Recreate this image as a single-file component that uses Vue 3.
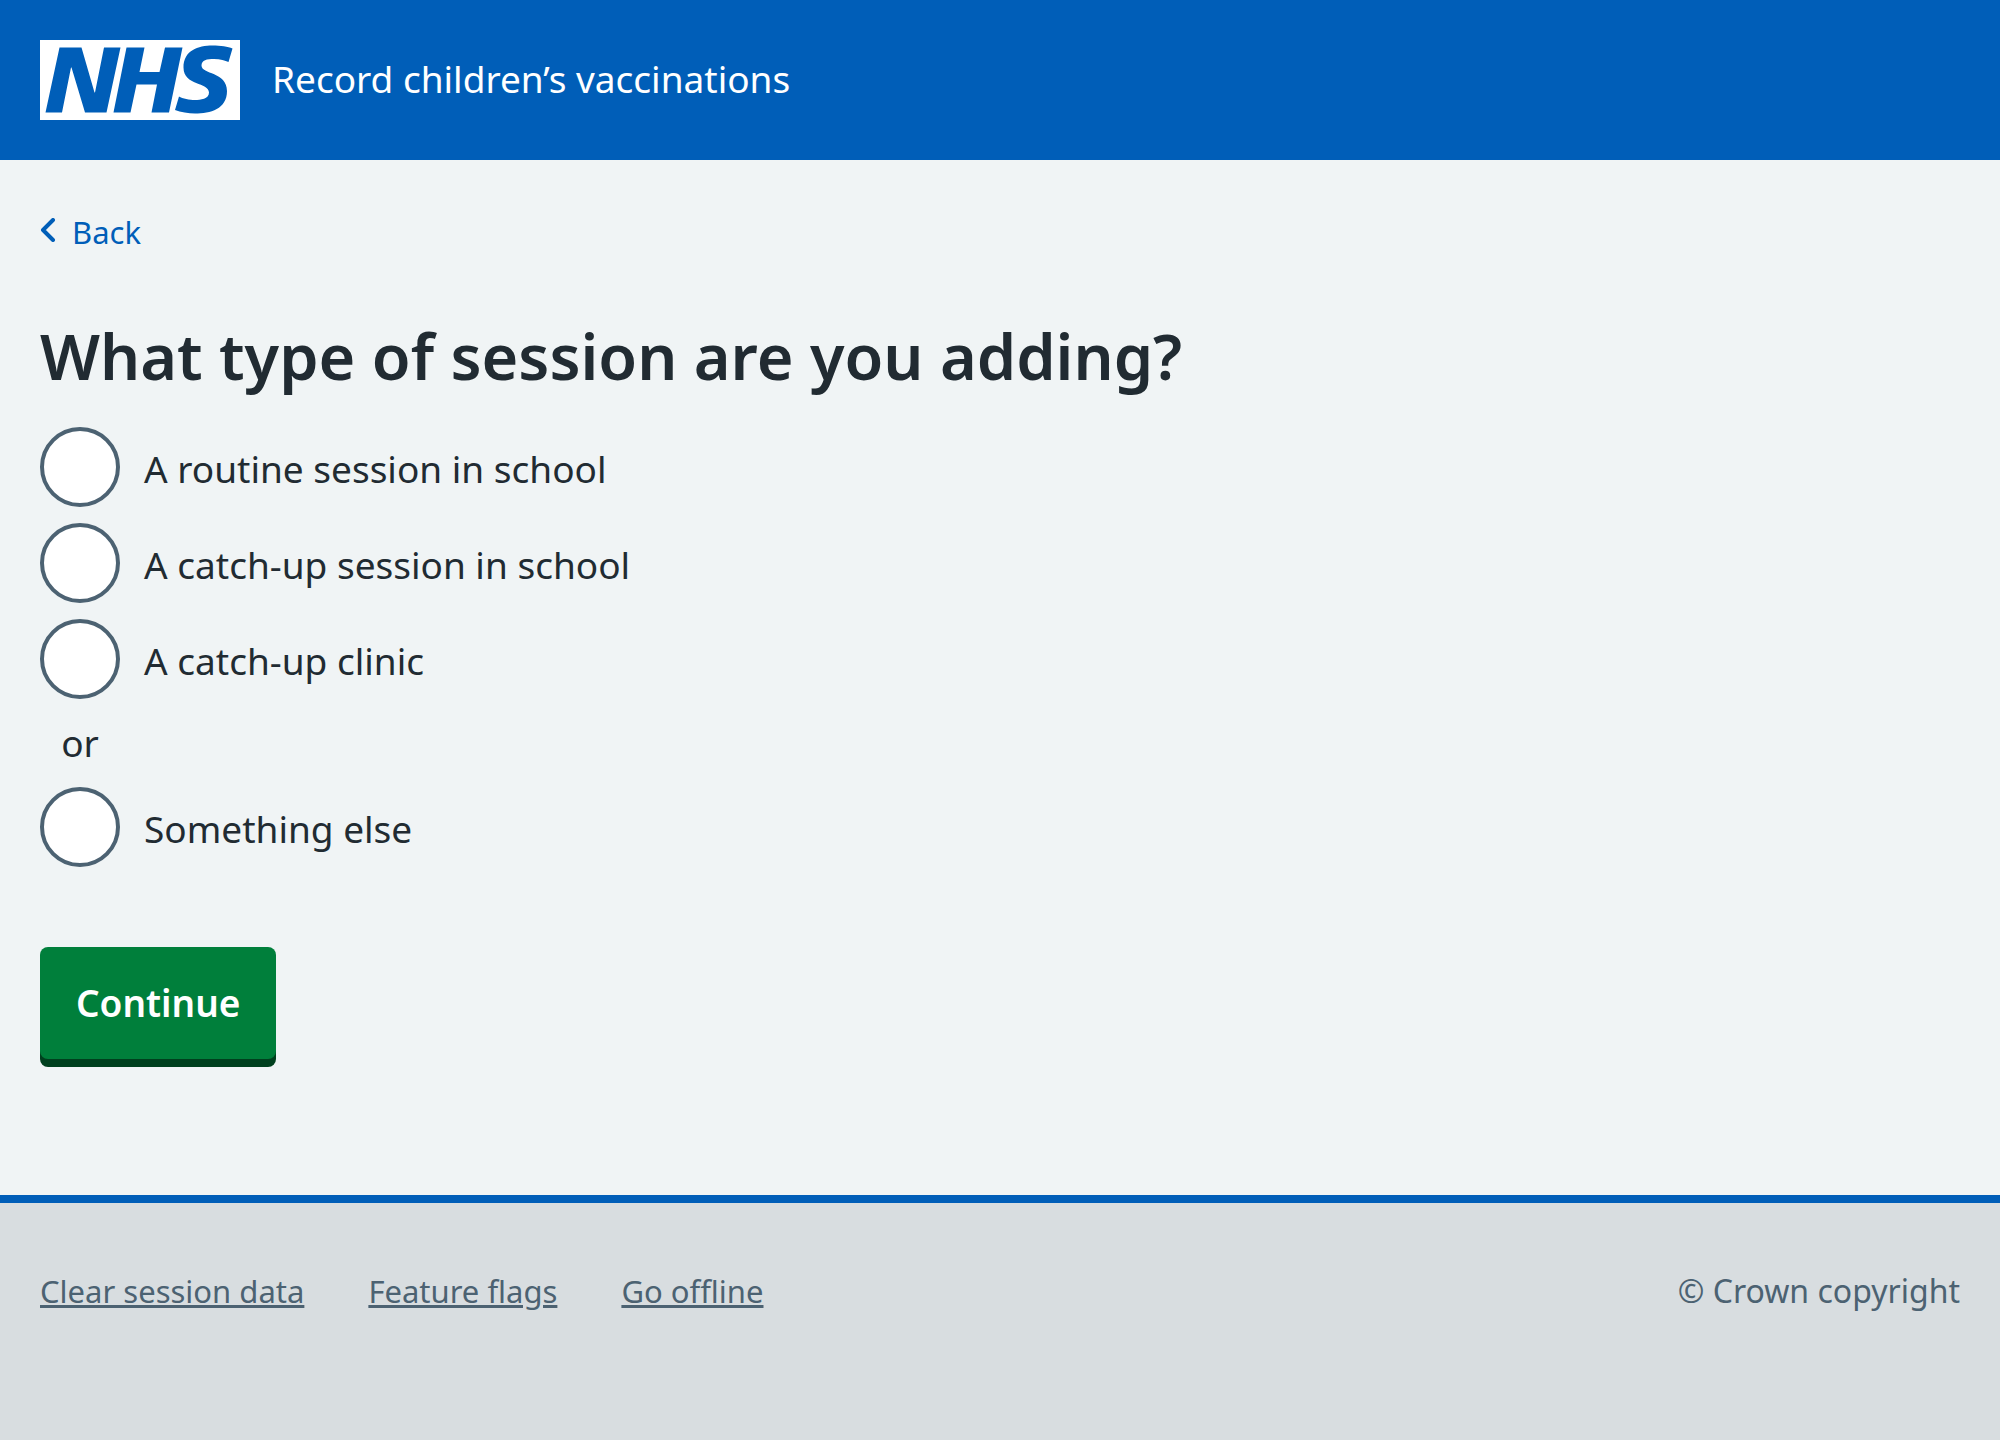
<script setup>
import { ref } from 'vue'

const choice = ref('')
const places = [
  { value: 'routine', label: 'A routine session in school' },
  { value: 'catch-up', label: 'A catch-up session in school' },
  { value: 'clinic', label: 'A catch-up clinic' },
]
const footerLinks = ['Clear session data', 'Feature flags', 'Go offline']
</script>

<template>
  <div class="page">
    <header class="header">
      <a class="brand" href="#">
        <svg class="logo" viewBox="0 0 40 16" role="img" aria-label="NHS">
          <path fill="#fff" d="M0 0h40v16H0z" />
          <path fill="#005eb8" d="M3.9 1.5h4.4l2.6 9h.1l1.8-9h3.3l-2.8 13H9l-2.7-9h-.1l-1.8 9H1.1M17.3 1.5h3.6l-1 4.9h4L25 1.5h3.5l-2.7 13h-3.5l1.1-5.6h-4.1l-1.2 5.6h-3.4M37.7 4.4c-.7-.3-1.6-.6-2.9-.6-1.4 0-2.5.2-2.5 1.3 0 1.8 5.1 1.2 5.1 5.1 0 3.6-3.3 4.5-6.4 4.5-1.3 0-2.9-.3-4-.7l.8-2.7c.7.4 2.1.7 3.2.7s2.8-.2 2.8-1.5c0-2.1-5.1-1.3-5.1-5 0-3.4 2.9-4.4 5.8-4.4 1.6 0 3.1.2 4 .6" />
        </svg>
        <span class="service">Record children’s vaccinations</span>
      </a>
    </header>
    <main class="main">
      <a class="back" href="#">
        <svg class="chevron" viewBox="0 0 16 24" aria-hidden="true">
          <path d="M13 2 3 12l10 10" fill="none" stroke="currentColor" stroke-width="4" stroke-linecap="round" stroke-linejoin="round" />
        </svg>
        Back
      </a>
      <form @submit.prevent>
        <fieldset class="fieldset">
          <legend class="legend"><h1 class="title">What type of session are you adding?</h1></legend>
          <div class="options">
            <label v-for="place in places" :key="place.value" class="option">
              <input v-model="choice" class="radio" type="radio" name="session" :value="place.value" />
              <span class="option-text">{{ place.label }}</span>
            </label>
            <div class="divider">or</div>
            <label class="option">
              <input v-model="choice" class="radio" type="radio" name="session" value="other" />
              <span class="option-text">Something else</span>
            </label>
          </div>
        </fieldset>
        <button class="button" type="submit">Continue</button>
      </form>
    </main>
    <footer class="footer">
      <nav class="footer-links">
        <a v-for="link in footerLinks" :key="link" href="#">{{ link }}</a>
      </nav>
      <p class="copyright">© Crown copyright</p>
    </footer>
  </div>
</template>

<style>
body {
  margin: 0;
  background: #d8dde0;
}
</style>

<style scoped>
.page {
  min-height: 100vh;
  display: flex;
  flex-direction: column;
  background: #f0f4f5;
  color: #212b32;
  font-family: "Noto Sans", sans-serif;
  font-size: 37px;
  line-height: 56px;
  font-variant-ligatures: none;
}
.header {
  padding: 40px;
  background: #005eb8;
}
.brand {
  display: flex;
  align-items: center;
  gap: 32px;
  color: #fff;
  text-decoration: none;
}
.logo {
  width: 200px;
  height: 80px;
}
.service {
  padding-bottom: 2px;
}
.main {
  padding: 48px 40px 136px;
}
.back {
  display: flex;
  align-items: center;
  gap: 16px;
  width: fit-content;
  color: #005eb8;
  font-size: 31px;
  line-height: 48px;
  text-decoration: none;
}
.chevron {
  width: 16px;
  height: 24px;
  margin-bottom: 4px;
}
.fieldset {
  margin: 0;
  padding: 0;
  border: 0;
}
.legend {
  padding: 0;
}
.title {
  margin: 64px 0 35px;
  font-size: 63px;
  line-height: 72px;
  font-weight: 600;
}
.options {
  display: flex;
  flex-direction: column;
  gap: 16px;
}
.option {
  display: flex;
  align-items: center;
  gap: 24px;
  width: fit-content;
}
.option-text {
  padding-top: 4px;
}
.radio {
  appearance: none;
  width: 80px;
  height: 80px;
  margin: 0;
  box-sizing: border-box;
  border: 4px solid #4c6272;
  border-radius: 50%;
  background: #fff;
}
.radio:checked {
  background: radial-gradient(#212b32 20px, #fff 21px);
}
.divider {
  width: 80px;
  text-align: center;
}
.button {
  margin: 80px 0 0;
  padding: 28px 36px;
  border: 0;
  border-radius: 8px;
  background: #007f3b;
  box-shadow: 0 8px 0 #00401e;
  color: #fff;
  font: inherit;
  font-weight: 600;
}
.footer {
  flex: 1;
  display: flex;
  justify-content: space-between;
  align-items: flex-start;
  padding: 64px 40px;
  border-top: 8px solid #005eb8;
  background: #d8dde0;
  color: #4c6272;
  font-size: 32px;
  line-height: 48px;
}
.footer-links {
  display: flex;
  gap: 64px;
  font-size: 31px;
}
.footer-links a {
  color: inherit;
  text-decoration-thickness: 3px;
  text-underline-offset: 2px;
}
.copyright {
  margin: 0;
}
</style>
